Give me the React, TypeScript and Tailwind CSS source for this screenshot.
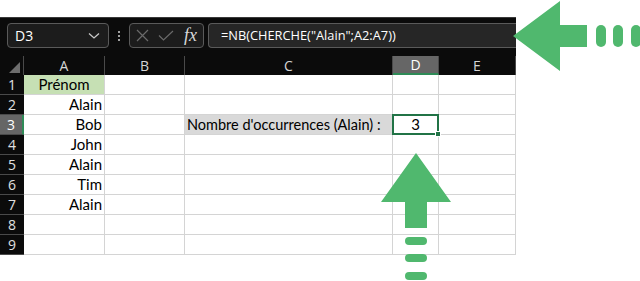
import React from "react";

const cols = ["A", "B", "C", "D", "E"];
const widths = [81, 80, 208, 46, 77];
const data: Record<string, string> = {
  A2: "Alain",
  A3: "Bob",
  A4: "John",
  A5: "Alain",
  A6: "Tim",
  A7: "Alain",
};

export default function App() {
  const rows = [1, 2, 3, 4, 5, 6, 7, 8, 9];
  return (
    <div
      className="relative w-[640px] h-[281px] bg-white overflow-hidden"
      style={{ fontFamily: "Lato, 'Liberation Sans', sans-serif" }}
    >
      <div className="h-[17px]" />
      <div className="w-[516px] bg-[#0b0b0b] border-t border-[#3a3a3a]">
        {/* formula bar */}
        <div className="flex items-center h-[38px] pt-[5px] pb-[8px] pl-[7px]">
          <div className="flex items-center justify-between w-[102px] h-[25px] rounded-[4px] border border-[#5a5a5a] bg-[#1c1c1c] pl-[7px] pr-[8px]">
            <span
              className="text-white text-[14px]"
              style={{ fontFamily: "'Open Sans', 'Noto Sans', sans-serif" }}
            >
              D3
            </span>
            <svg width="12" height="8" viewBox="0 0 12 8">
              <path d="M1 1.5 L6 6 L11 1.5" stroke="#c8c8c8" strokeWidth="1.3" fill="none" />
            </svg>
          </div>
          <div className="w-[20px] flex flex-col items-center justify-center gap-[2px]">
            <div className="w-[2px] h-[2px] bg-[#a0a0a0]" />
            <div className="w-[2px] h-[2px] bg-[#a0a0a0]" />
            <div className="w-[2px] h-[2px] bg-[#a0a0a0]" />
          </div>
          <div className="flex items-center w-[75px] h-[25px] rounded-[4px] border border-[#5a5a5a] bg-[#1c1c1c] pl-[6px]">
            <svg width="13" height="13" viewBox="0 0 13 13">
              <path d="M1 1 L12 12 M12 1 L1 12" stroke="#6a6a6a" strokeWidth="1.2" />
            </svg>
            <svg className="ml-[9px]" width="16" height="12" viewBox="0 0 16 12">
              <path d="M1 5.5 L5.5 10 L15 1" stroke="#6a6a6a" strokeWidth="1.2" fill="none" />
            </svg>
            <span
              className="text-[#d8d8d8] text-[18px] italic leading-none ml-[10px] mb-[2px]"
              style={{ fontFamily: "'Liberation Serif', 'DejaVu Serif', serif" }}
            >
              fx
            </span>
          </div>
          <div className="flex items-center flex-1 h-[25px] ml-[4px] rounded-l-[4px] border-y border-l border-[#5a5a5a] bg-[#262626] pl-[12px]">
            <span
              className="text-white text-[12.8px]"
              style={{ fontFamily: "'Open Sans', 'Noto Sans', sans-serif" }}
            >
              =NB(CHERCHE("Alain";A2:A7))
            </span>
          </div>
        </div>
        {/* grid */}
        <div
          className="grid"
          style={{
            gridTemplateColumns: `24px ${widths.map((w) => w + "px").join(" ")}`,
            gridTemplateRows: `19px repeat(9, 20px)`,
          }}
        >
          <div className="relative bg-[#0b0b0b] border-r border-[#4a4a4a]">
            <svg className="absolute right-[3px] bottom-[2px]" width="11" height="11" viewBox="0 0 11 11">
              <path d="M11 0 L11 11 L0 11 Z" fill="#6e6e6e" />
            </svg>
          </div>
          {cols.map((c) => (
            <div
              key={c}
              className={`flex items-center justify-center text-[14px] border-r ${
                c === "D"
                  ? "bg-[#666666] text-white border-b-2 border-b-[#2e8b57] border-r-[#4a4a4a]"
                  : "bg-[#0b0b0b] text-[#d6d6d6] border-[#4a4a4a]"
              }`}
              style={{ fontFamily: "'Open Sans', 'Noto Sans', sans-serif" }}
            >
              {c}
            </div>
          ))}
          {rows.map((r) => (
            <React.Fragment key={r}>
              <div
                className={`flex items-center justify-center text-[14px] border-b border-[#4a4a4a] ${
                  r === 3
                    ? "bg-[#666666] text-white border-r-2 border-r-[#2e8b57]"
                    : "bg-[#0b0b0b] text-[#e0e0e0]"
                }`}
                style={{ fontFamily: "'Open Sans', 'Noto Sans', sans-serif" }}
              >
                {r}
              </div>
              {cols.map((c) => {
                const key = c + r;
                if (key === "A1") {
                  return (
                    <div
                      key={key}
                      className="flex items-center justify-center bg-[#c6e0b4] border-r border-b border-[#d4d4d4] text-[15px] text-black"
                    >
                      Prénom
                    </div>
                  );
                }
                if (key === "C3") {
                  return (
                    <div
                      key={key}
                      className="flex items-center bg-[#d9d9d9] border-r border-b border-[#d4d4d4] text-[14.5px] text-black pl-[2px]"
                    >
                      Nombre d'occurrences (Alain) :
                    </div>
                  );
                }
                if (key === "D3") {
                  return (
                    <div
                      key={key}
                      className="relative flex items-center justify-center bg-white border-r border-b border-[#d4d4d4] text-[15px] text-black"
                    >
                      <div className="absolute left-[-1px] top-[-1px] right-[-1px] bottom-[-1px] border-2 border-[#217346]" />
                      <div className="absolute right-[-3px] bottom-[-3px] w-[6px] h-[6px] bg-[#217346] border border-white" />
                      3
                    </div>
                  );
                }
                return (
                  <div
                    key={key}
                    className="flex items-center justify-end bg-white border-r border-b border-[#d4d4d4] text-[15px] text-black pr-[2px]"
                  >
                    {data[key] ?? ""}
                  </div>
                );
              })}
            </React.Fragment>
          ))}
        </div>
      </div>
      <svg
        className="absolute left-0 top-0 pointer-events-none"
        width="640"
        height="281"
        viewBox="0 0 640 281"
      >
        <polygon
          points="513,36 560,1 560,25 587,25 587,47 560,47 560,71"
          fill="#50b86e"
        />
        <rect x="596" y="25" width="10" height="22" rx="5" fill="#50b86e" />
        <rect x="613" y="25" width="10" height="22" rx="5" fill="#50b86e" />
        <rect x="631" y="25" width="10" height="22" rx="5" fill="#50b86e" />
        <polygon
          points="416,153 451,202 427,202 427,228 405,228 405,202 381,202"
          fill="#50b86e"
        />
        <rect x="405" y="237" width="22" height="8" rx="4" fill="#50b86e" />
        <rect x="405" y="254" width="22" height="8" rx="4" fill="#50b86e" />
        <rect x="405" y="272" width="22" height="8" rx="4" fill="#50b86e" />
      </svg>
    </div>
  );
}
